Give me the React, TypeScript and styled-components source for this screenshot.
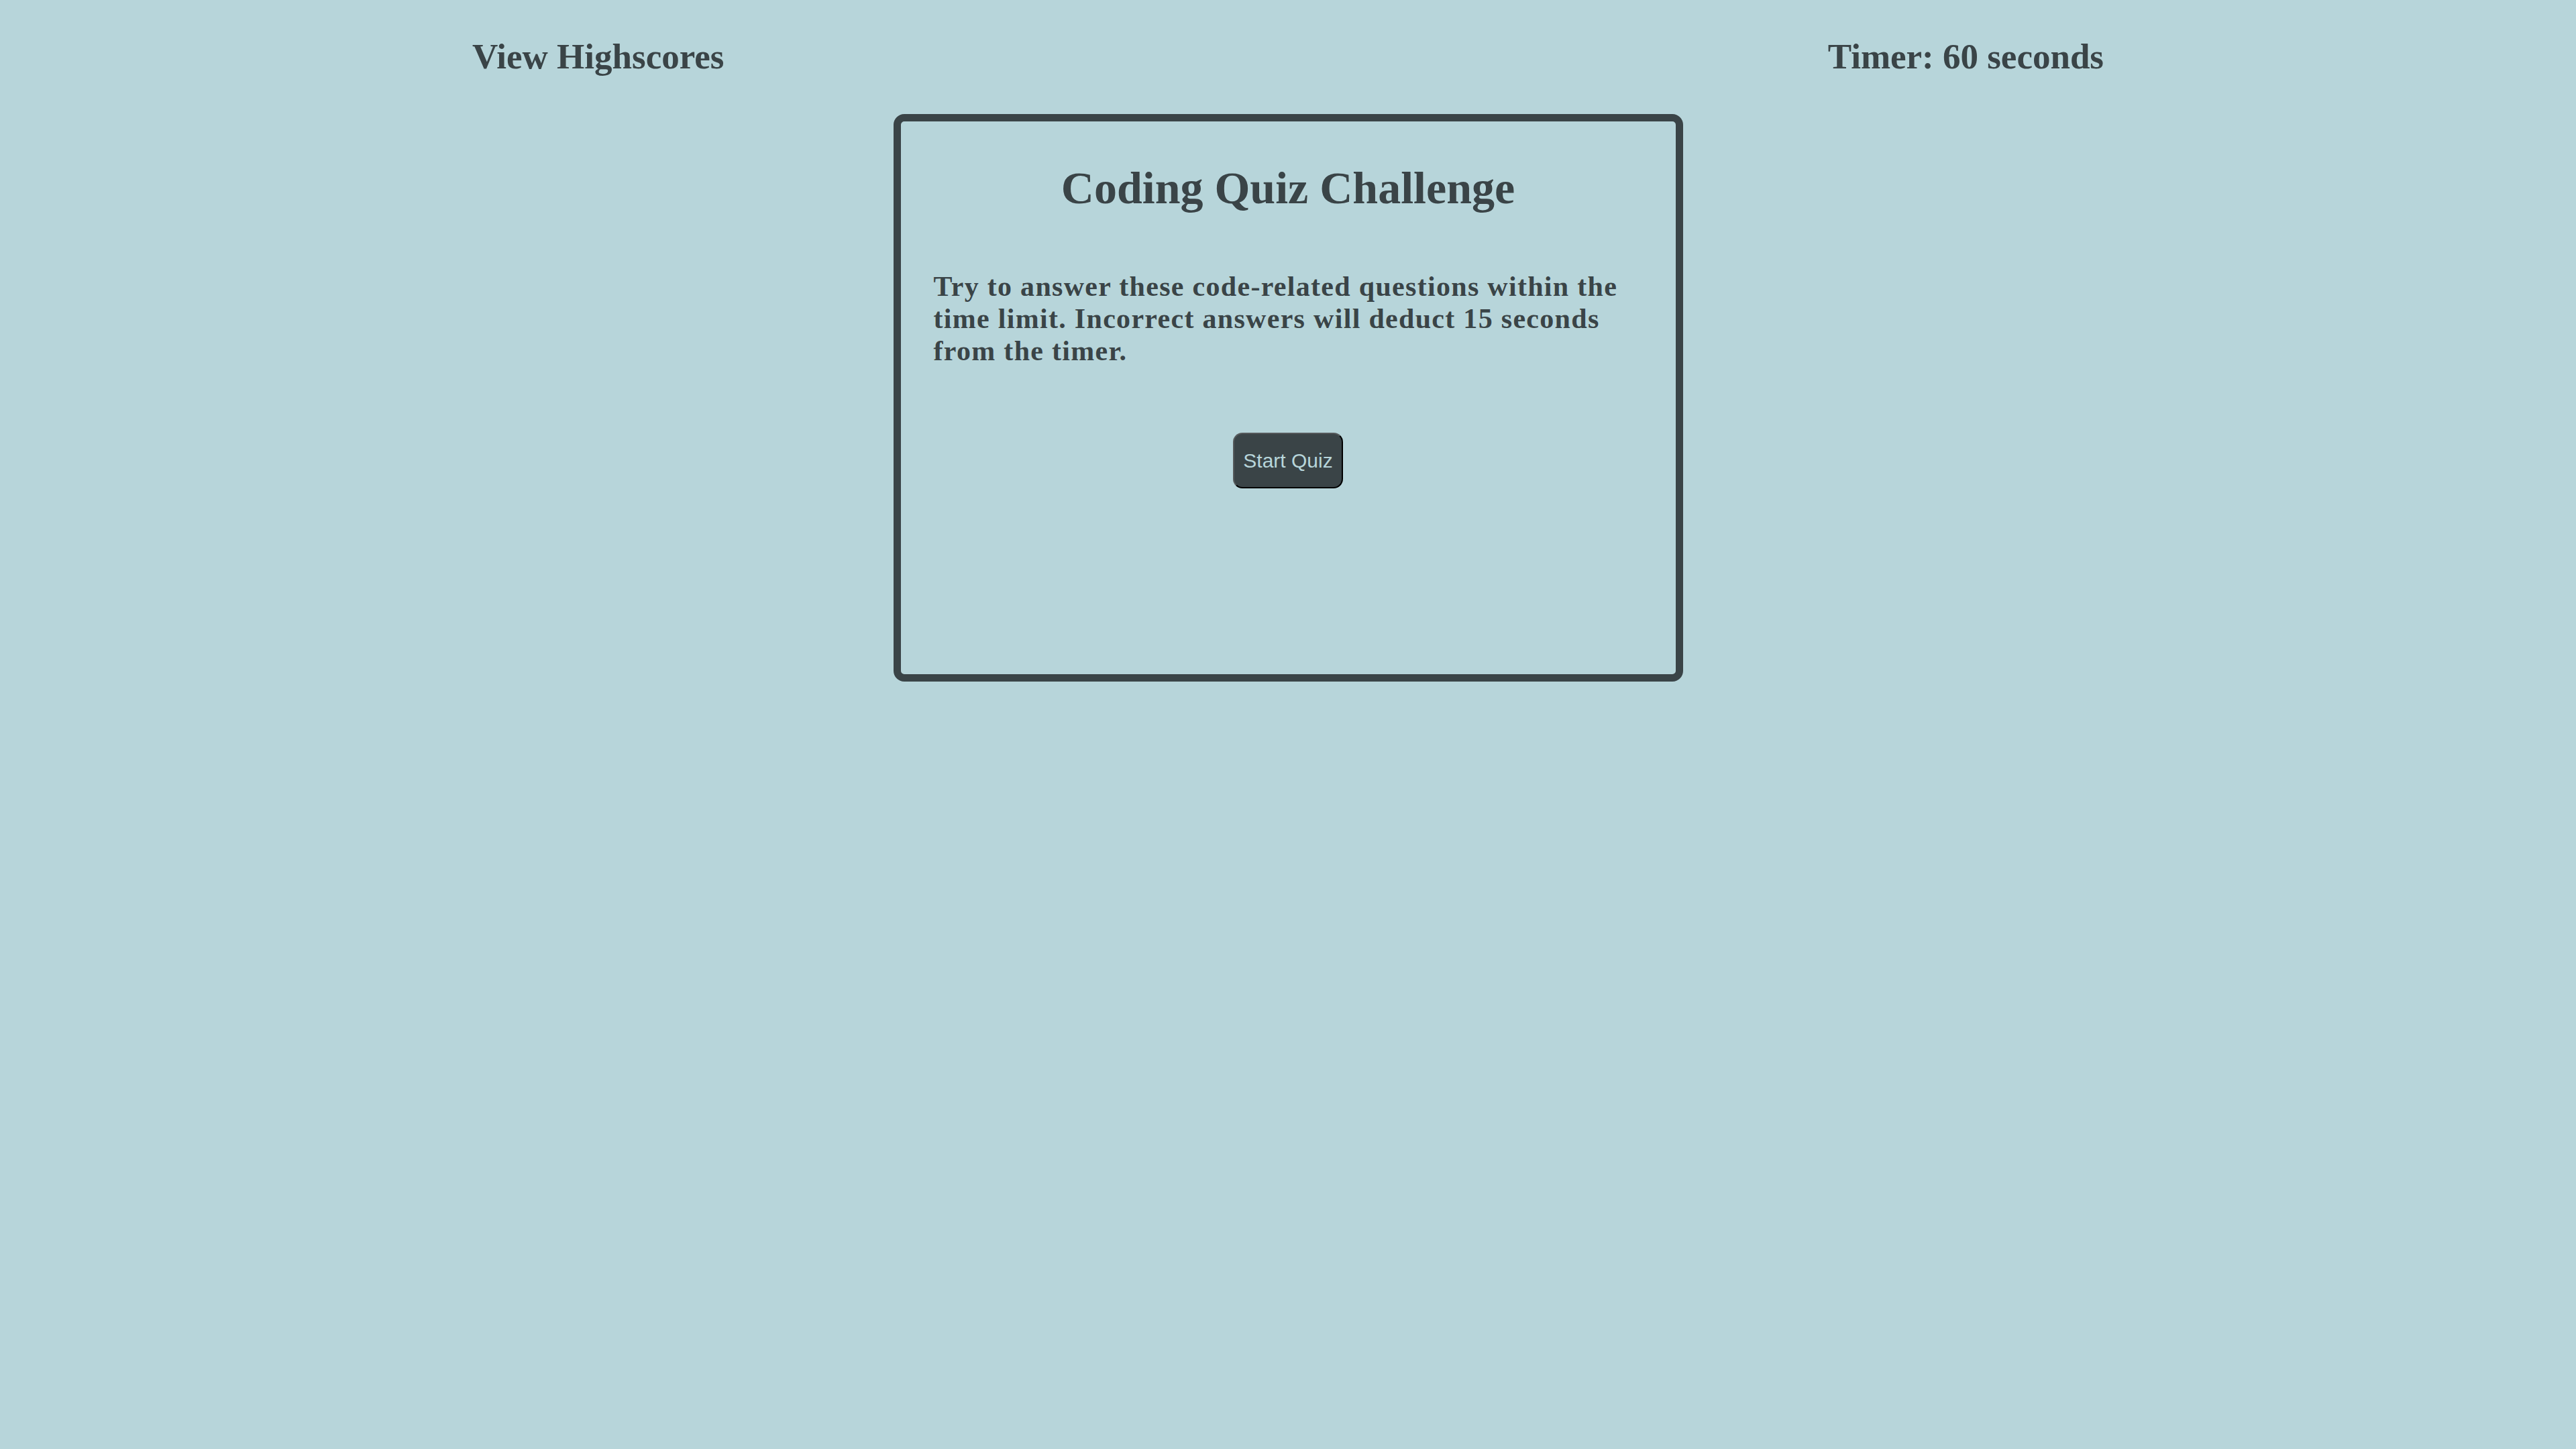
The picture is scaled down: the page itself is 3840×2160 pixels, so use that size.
import React from "react";
import styled, { createGlobalStyle } from "styled-components";

const GlobalStyle = createGlobalStyle`
  html, body {
    margin: 0;
    padding: 0;
    background: #b7d5da;
  }
  body {
    font-family: "Liberation Serif", "Times New Roman", serif;
    color: #3a4447;
    min-height: 2160px;
  }
`;

const Header = styled.header`
  width: 2432px;
  margin: 0 auto;
  padding-top: 54px;
  display: flex;
  justify-content: space-between;
  align-items: flex-start;
`;

const HeaderText = styled.div`
  font-size: 53px;
  font-weight: 700;
  line-height: 61px;
  color: #3a4447;
  cursor: ${(p: { $link?: boolean }) => (p.$link ? "pointer" : "default")};
`;

const Card = styled.main`
  box-sizing: border-box;
  width: 1177px;
  height: 846px;
  margin: 55px auto 0;
  border: 11px solid #3a4447;
  border-radius: 16px;
  padding: 59px 49px 0;
  display: flex;
  flex-direction: column;
  align-items: center;
`;

const Title = styled.h1`
  margin: 0;
  font-size: 68px;
  line-height: 80px;
  font-weight: 700;
  text-align: center;
  color: #3a4447;
`;

const Intro = styled.p`
  margin: 83px 0 0;
  align-self: stretch;
  font-size: 42px;
  line-height: 48px;
  font-weight: 700;
  letter-spacing: 1.3px;
  color: #3a4447;
`;

const StartButton = styled.button`
  margin-top: 98px;
  box-sizing: border-box;
  width: 164px;
  height: 83px;
  padding: 0;
  font-family: "Liberation Sans", Arial, sans-serif;
  font-size: 30px;
  color: #b7d5da;
  background: #3a4447;
  border: 2px solid;
  border-color: #55595b #000 #000 #55595b;
  border-radius: 14px;
  cursor: pointer;
`;

export default function App() {
  return (
    <>
      <GlobalStyle />
      <Header>
        <HeaderText $link>View Highscores</HeaderText>
        <HeaderText>Timer: 60 seconds</HeaderText>
      </Header>
      <Card>
        <Title>Coding Quiz Challenge</Title>
        <Intro>
          Try to answer these code-related questions within the time limit.
          Incorrect answers will deduct 15 seconds from the timer.
        </Intro>
        <StartButton>Start Quiz</StartButton>
      </Card>
    </>
  );
}
